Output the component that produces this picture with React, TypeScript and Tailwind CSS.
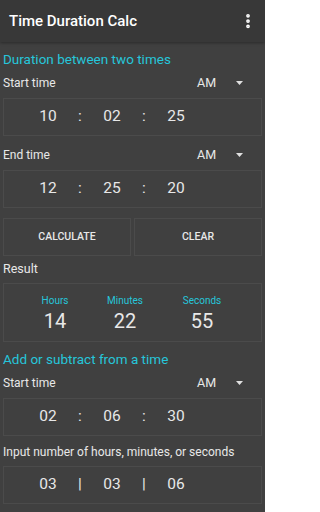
import { MoreVertical } from "lucide-react";

const font = { fontFamily: "Roboto, 'Noto Sans', sans-serif" };

function AmRow({ label }: { label: string }) {
  return (
    <div className="flex items-center h-[24px] pl-[3px] pr-[22px]">
      <span className="flex-1 text-[12px] text-[#e8e8e8]">{label}</span>
      <span className="text-[12.5px] text-[#e8e8e8] w-[39px]">AM</span>
      <svg width="7" height="4" viewBox="0 0 7 4">
        <path d="M0 0 L7 0 L3.5 4 Z" fill="#e0e0e0" />
      </svg>
    </div>
  );
}

function TimeBox({ values, sep }: { values: string[]; sep: string }) {
  return (
    <div className="mx-[3px] h-[38px] border border-[#4b4b4b] flex items-center pl-[28px]">
      {values.map((v, i) => (
        <div key={i} className="flex">
          {i > 0 && (
            <span className="w-[32px] text-center text-[15.5px] text-[#e8e8e8]">{sep}</span>
          )}
          <span className="w-[32px] text-center text-[15.5px] text-[#e8e8e8]">{v}</span>
        </div>
      ))}
    </div>
  );
}

function ResultCell({ label, value, width }: { label: string; value: string; width: string }) {
  return (
    <div className={`${width} flex flex-col items-center`}>
      <span className="text-[10px] text-[#26c6da] leading-[13px]">{label}</span>
      <span className="mt-[2px] text-[20px] text-[#e8e8e8] leading-[24px]">{value}</span>
    </div>
  );
}

export default function App() {
  return (
    <div style={font} className="w-[265px] h-[512px] bg-[#404040] overflow-hidden flex flex-col">
      {/* toolbar */}
      <div className="h-[42px] bg-[#383838] shadow-[0_1px_3px_rgba(0,0,0,0.35)] flex items-center pl-[9px] pr-[8px] shrink-0">
        <span className="flex-1 text-[15px] font-medium text-white">Time Duration Calc</span>
        <MoreVertical className="w-[18px] h-[18px] text-white" strokeWidth={3} />
      </div>

      <div className="text-[13.5px] text-[#26c6da] pl-[3px] mt-[7px] h-[20px] leading-[20px]">
        Duration between two times
      </div>
      <div className="mt-[2px]">
        <AmRow label="Start time" />
      </div>
      <div className="mt-[3px]">
        <TimeBox values={["10", "02", "25"]} sep=":" />
      </div>
      <div className="mt-[7px]">
        <AmRow label="End time" />
      </div>
      <div className="mt-[3px]">
        <TimeBox values={["12", "25", "20"]} sep=":" />
      </div>

      <div className="mx-[3px] mt-[10px] h-[38px] flex gap-[3px]">
        <button className="flex-1 border border-[#4b4b4b] text-[10.5px] font-medium text-[#e8e8e8]">CALCULATE</button>
        <button className="flex-1 border border-[#4b4b4b] text-[10.5px] font-medium text-[#e8e8e8]">CLEAR</button>
      </div>

      <div className="pl-[3px] mt-[1px] h-[24px] leading-[24px] text-[12.5px] text-[#e8e8e8]">Result</div>
      <div className="mx-[3px] mt-[2px] h-[59px] border border-[#4b4b4b] flex pl-[16px] pt-[10px]">
        <ResultCell label="Hours" value="14" width="w-[70px]" />
        <ResultCell label="Minutes" value="22" width="w-[70px]" />
        <ResultCell label="Seconds" value="55" width="w-[84px]" />
      </div>

      <div className="text-[13.5px] text-[#26c6da] pl-[3px] mt-[7px] h-[20px] leading-[20px]">
        Add or subtract from a time
      </div>
      <div className="mt-[2px]">
        <AmRow label="Start time" />
      </div>
      <div className="mt-[3px]">
        <TimeBox values={["02", "06", "30"]} sep=":" />
      </div>
      <div className="pl-[3px] mt-[4px] h-[24px] leading-[24px] text-[12px] text-[#e8e8e8]">
        Input number of hours, minutes, or seconds
      </div>
      <div className="mt-[2px]">
        <TimeBox values={["03", "03", "06"]} sep="|" />
      </div>
    </div>
  );
}
